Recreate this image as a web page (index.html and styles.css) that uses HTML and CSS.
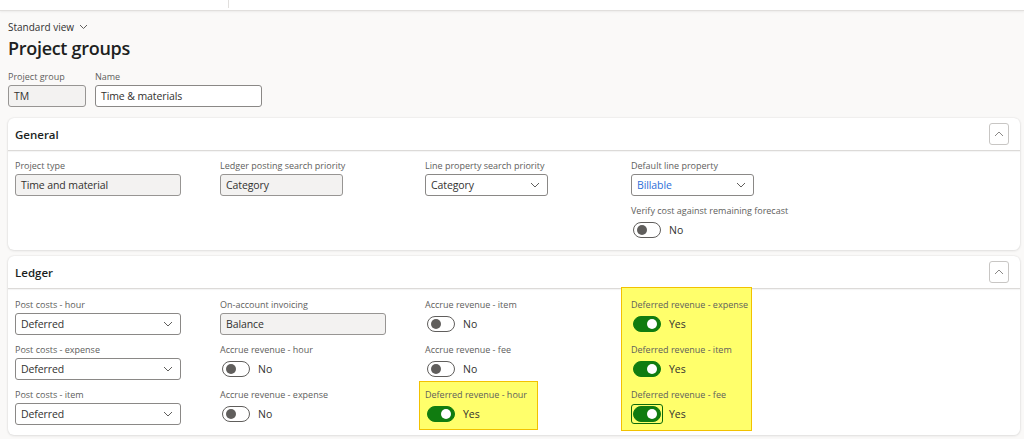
FILE: index.html
```html
<!DOCTYPE html>
<html lang="en">
<head>
    <meta charset="UTF-8">
    <meta name="viewport" content="width=device-width, initial-scale=1.0">
    <title>Project groups</title>
    <link rel="stylesheet" href="styles.css">
</head>
<body>
    <div class="topbar">
        <span class="topbar-divider"></span>
    </div>

    <div class="page">
        <div class="view-switch">
            Standard view
            <svg class="chev-small" width="9" height="6" viewBox="0 0 9 6"><path d="M1 1l3.5 3.5L8 1" fill="none" stroke="#605e5c" stroke-width="1"/></svg>
        </div>
        <h1 class="page-title">Project groups</h1>

        <div class="header-fields">
            <div class="field">
                <div class="label">Project group</div>
                <div class="input readonly w-tm">TM</div>
            </div>
            <div class="field">
                <div class="label">Name</div>
                <div class="input w-name">Time &amp; materials</div>
            </div>
        </div>

        <!-- General -->
        <section class="card">
            <div class="card-header">
                <h2>General</h2>
                <div class="collapse">
                    <svg width="10" height="6" viewBox="0 0 10 6"><path d="M1 5l4-4 4 4" fill="none" stroke="#8a8886" stroke-width="1"/></svg>
                </div>
            </div>
            <div class="card-body">
                <div class="col">
                    <div class="field">
                        <div class="label">Project type</div>
                        <div class="input readonly w-wide">Time and material</div>
                    </div>
                </div>
                <div class="col">
                    <div class="field">
                        <div class="label">Ledger posting search priority</div>
                        <div class="input readonly w-mid">Category</div>
                    </div>
                </div>
                <div class="col">
                    <div class="field">
                        <div class="label">Line property search priority</div>
                        <div class="input select w-mid">Category
                            <svg width="10" height="6" viewBox="0 0 10 6"><path d="M1 1l4 4 4-4" fill="none" stroke="#605e5c" stroke-width="1"/></svg>
                        </div>
                    </div>
                </div>
                <div class="col">
                    <div class="field">
                        <div class="label">Default line property</div>
                        <div class="input select w-mid link">Billable
                            <svg width="10" height="6" viewBox="0 0 10 6"><path d="M1 1l4 4 4-4" fill="none" stroke="#605e5c" stroke-width="1"/></svg>
                        </div>
                    </div>
                    <div class="field">
                        <div class="label">Verify cost against remaining forecast</div>
                        <div class="switch"><span class="toggle"></span>No</div>
                    </div>
                </div>
            </div>
        </section>

        <!-- Ledger -->
        <section class="card">
            <div class="card-header">
                <h2>Ledger</h2>
                <div class="collapse">
                    <svg width="10" height="6" viewBox="0 0 10 6"><path d="M1 5l4-4 4 4" fill="none" stroke="#8a8886" stroke-width="1"/></svg>
                </div>
            </div>
            <div class="card-body ledger">
                <div class="col">
                    <div class="field">
                        <div class="label">Post costs - hour</div>
                        <div class="input select w-wide">Deferred
                            <svg width="10" height="6" viewBox="0 0 10 6"><path d="M1 1l4 4 4-4" fill="none" stroke="#605e5c" stroke-width="1"/></svg>
                        </div>
                    </div>
                    <div class="field">
                        <div class="label">Post costs - expense</div>
                        <div class="input select w-wide">Deferred
                            <svg width="10" height="6" viewBox="0 0 10 6"><path d="M1 1l4 4 4-4" fill="none" stroke="#605e5c" stroke-width="1"/></svg>
                        </div>
                    </div>
                    <div class="field">
                        <div class="label">Post costs - item</div>
                        <div class="input select w-wide">Deferred
                            <svg width="10" height="6" viewBox="0 0 10 6"><path d="M1 1l4 4 4-4" fill="none" stroke="#605e5c" stroke-width="1"/></svg>
                        </div>
                    </div>
                </div>
                <div class="col">
                    <div class="field">
                        <div class="label">On-account invoicing</div>
                        <div class="input readonly w-wide">Balance</div>
                    </div>
                    <div class="field">
                        <div class="label">Accrue revenue - hour</div>
                        <div class="switch"><span class="toggle"></span>No</div>
                    </div>
                    <div class="field">
                        <div class="label">Accrue revenue - expense</div>
                        <div class="switch"><span class="toggle"></span>No</div>
                    </div>
                </div>
                <div class="col">
                    <div class="field">
                        <div class="label">Accrue revenue - item</div>
                        <div class="switch"><span class="toggle"></span>No</div>
                    </div>
                    <div class="field">
                        <div class="label">Accrue revenue - fee</div>
                        <div class="switch"><span class="toggle"></span>No</div>
                    </div>
                    <div class="field highlight hl-hour">
                        <div class="label">Deferred revenue - hour</div>
                        <div class="switch"><span class="toggle on"></span>Yes</div>
                    </div>
                </div>
                <div class="col">
                    <div class="highlight hl-deferred">
                        <div class="field">
                            <div class="label">Deferred revenue - expense</div>
                            <div class="switch"><span class="toggle on"></span>Yes</div>
                        </div>
                        <div class="field">
                            <div class="label">Deferred revenue - item</div>
                            <div class="switch"><span class="toggle on"></span>Yes</div>
                        </div>
                        <div class="field">
                            <div class="label">Deferred revenue - fee</div>
                            <div class="switch"><span class="toggle on focused"></span>Yes</div>
                        </div>
                    </div>
                </div>
            </div>
        </section>
    </div>
</body>
</html>
```

FILE: styles.css
```css
/* base */
body {
    margin: 0;
    font-family: "Segoe UI", "Open Sans", "Noto Sans", sans-serif;
    background-color: #faf9f8;
    color: #323130;
    -webkit-font-smoothing: antialiased;
}

/* top command bar (cut off in the view) */
.topbar {
    height: 10px;
    background-color: #ffffff;
    border-bottom: 1px solid #e1dfdd;
    box-shadow: 0 1px 2px rgba(0, 0, 0, 0.06);
    display: flex;
    padding-left: 228px;
}
.topbar-divider {
    width: 1px;
    height: 8px;
    background-color: #e1dfdd;
}

.page {
    padding: 8px 4px 0 8px;
}

/* page header */
.view-switch {
    font-size: 10px;
    line-height: 16px;
    color: #323130;
    display: flex;
    align-items: center;
    gap: 5px;
}
.page-title {
    font-size: 18px;
    font-weight: 600;
    line-height: 26px;
    margin: 0;
    color: #201f1e;
    letter-spacing: -0.3px;
}

.header-fields {
    display: flex;
    gap: 9px;
    margin-top: 7px;
    margin-bottom: 11px;
}

/* fields */
.field {
    display: flex;
    flex-direction: column;
}
.label {
    font-size: 9px;
    line-height: 14px;
    height: 14px;
    color: #605e5c;
    white-space: nowrap;
    margin: 2px 0 1px;
}
.input {
    box-sizing: border-box;
    height: 22px;
    border: 1px solid #8a8886;
    border-radius: 3px;
    background-color: #ffffff;
    font-size: 10.5px;
    letter-spacing: -0.1px;
    line-height: 20px;
    padding: 0 7px 0 5px;
    display: flex;
    align-items: center;
    justify-content: space-between;
    color: #323130;
    white-space: nowrap;
}
.input.readonly {
    background-color: #f3f2f1;
    border-color: #979593;
}
.input.link {
    color: #2f6fd8;
}
.w-tm   { width: 78px; }
.w-name { width: 167px; }
.w-wide { width: 166px; }
.w-mid  { width: 123px; }

/* cards */
.card {
    background-color: #ffffff;
    border-radius: 6px;
    box-shadow: 0 0 2px rgba(0, 0, 0, 0.12), 0 1px 3px rgba(0, 0, 0, 0.08);
    margin-bottom: 6px;
}
.card-header {
    height: 33px;
    box-sizing: border-box;
    display: flex;
    align-items: center;
    justify-content: space-between;
    padding: 0 11px 0 7px;
    border-bottom: 1px solid #dcdad8;
    box-shadow: 0 1px 1px rgba(0, 0, 0, 0.04);
}
.card-header h2 {
    font-size: 11.5px;
    font-weight: 600;
    margin: 0;
    color: #201f1e;
}
.collapse {
    box-sizing: border-box;
    width: 20px;
    height: 22px;
    border: 1px solid #c8c6c4;
    border-radius: 3px;
    display: flex;
    align-items: center;
    justify-content: center;
}

.card-body {
    display: grid;
    grid-template-columns: 205px 205px 206px 1fr;
    padding: 6px 7px 9px;
    align-items: start;
}
.card-body.ledger {
    padding: 7px 7px 10px;
}
.col {
    display: flex;
    flex-direction: column;
    gap: 6px;
}

/* toggles */
.switch {
    height: 22px;
    display: flex;
    align-items: center;
    gap: 8px;
    font-size: 10.5px;
    color: #323130;
    padding-left: 2px;
}
.toggle {
    position: relative;
    box-sizing: border-box;
    width: 28px;
    height: 16px;
    border: 1px solid #605e5c;
    border-radius: 8px;
    background-color: #ffffff;
}
.toggle::after {
    content: "";
    position: absolute;
    top: 2px;
    left: 3px;
    width: 10px;
    height: 10px;
    border-radius: 50%;
    background-color: #605e5c;
}
.toggle.on {
    background-color: #107c10;
    border-color: #107c10;
}
.toggle.on::after {
    left: auto;
    right: 3px;
    background-color: #ffffff;
}
.toggle.focused::before {
    content: "";
    position: absolute;
    inset: -3px;
    border: 1px solid #0b6a0b;
    border-radius: 3px;
}

/* yellow annotation boxes */
.highlight {
    box-sizing: border-box;
    background-color: #ffff6b;
    border: 1px solid #f2c200;
}
.hl-hour {
    width: 119px;
    padding: 4px 0 4px 5px;
    margin: -5px 0 -5px -6px;
}
.hl-deferred {
    width: 131px;
    display: flex;
    flex-direction: column;
    gap: 6px;
    padding: 8px 0 5px 9px;
    margin: -9px 0 -6px -10px;
}
```
